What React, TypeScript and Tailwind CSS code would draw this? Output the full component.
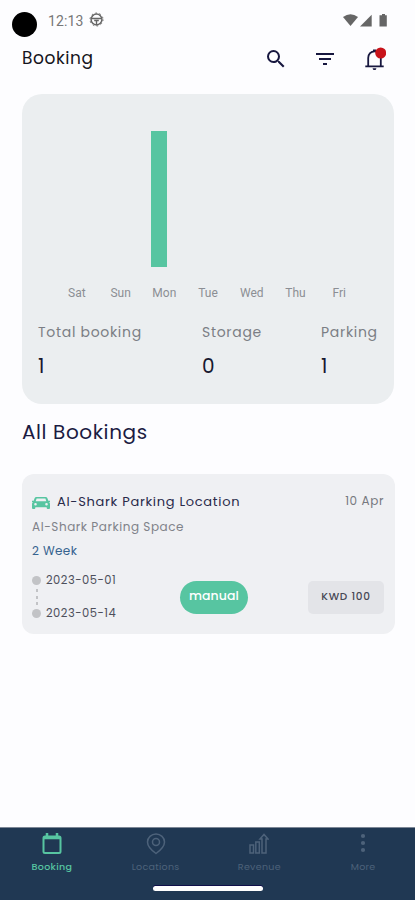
import React from "react";
import clsx from "clsx";
import { MdFilterList, MdSearch } from "react-icons/md";

const days = [
  { label: "Sat", value: 0 },
  { label: "Sun", value: 0 },
  { label: "Mon", value: 1 },
  { label: "Tue", value: 0 },
  { label: "Wed", value: 0 },
  { label: "Thu", value: 0 },
  { label: "Fri", value: 0 },
];

const StatusBar: React.FC<{}> = () => (
  <div className="flex h-10 items-start pl-3 pr-[27px] pt-3 text-[#666]">
    <div className="h-[25px] w-[25px] shrink-0 rounded-full bg-black" />
    <span className="ml-[11px] font-[Roboto] text-[14px] leading-[18px] tracking-[0.1px] text-[#777]">
      12:13
    </span>
    <svg className="ml-[6px]" width="15" height="15" viewBox="0 0 15 15" fill="none" stroke="currentColor">
      <circle cx="7.5" cy="7.5" r="5.4" strokeWidth="1.5" />
      <circle cx="7.5" cy="7.5" r="6.5" strokeWidth="1" strokeDasharray="1.6 2.5" />
      <path d="M3 6.5h9M7.5 8v5M5.2 8.5h4.6" strokeWidth="1.4" />
    </svg>
    <svg className="ml-auto mt-[2px]" width="45" height="13" viewBox="0 0 45 13" fill="currentColor">
      <path d="M0 3Q7.5-2.5 15 3L7.5 12Z" />
      <path d="M17 12.5L28.7.8V12.5Z" />
      <path d="M39 0h3v1.3h1.8v11.2h-7.3V1.3H39Z" />
    </svg>
  </div>
);

const Header: React.FC<{}> = () => (
  <div className="flex h-[38px] items-center pl-[22px] pr-[29px] text-[#17173f]">
    <h1 className="pb-[2px] text-[17px] leading-none tracking-[0.6px] text-[#15151c]">Booking</h1>
    <MdSearch className="ml-auto" size={24} />
    <MdFilterList className="ml-[25px]" size={24} />
    <svg className="ml-[26px]" width="23" height="26" viewBox="0 0 23 26" fill="none">
      <path d="M5.2 20V12C5.2 8 8 5.3 11.5 5.3S17.8 8 17.8 12V20M2.3 20.3H20.7" stroke="currentColor" strokeWidth="1.8" />
      <path d="M10 5.5V3.6h3v1.9M9.6 22.2h3.8a1.9 1.9 0 0 1-3.8 0Z" fill="currentColor" />
      <circle cx="17.7" cy="7" r="5.5" fill="#c8131a" />
    </svg>
  </div>
);

const Chart: React.FC<{}> = () => (
  <div className="ml-[33px] flex h-[187px] w-[306px] pt-[37px]">
    {days.map((day) => (
      <div key={day.label} className="flex flex-1 flex-col items-center">
        <div className="mr-[10px] flex h-[136px] w-4 shrink-0 items-end">
          <div className="w-full bg-[#57c5a1]" style={{ height: `${day.value * 100}%` }} />
        </div>
        <span className="mt-5 font-[Roboto] text-[12px] leading-3 text-[#8b8e94]">{day.label}</span>
      </div>
    ))}
  </div>
);

const Stat: React.FC<{ label: string; value: number; className?: string }> = ({
  label,
  value,
  className,
}) => (
  <div className={clsx("shrink-0 whitespace-nowrap", className)}>
    <p className="text-[14px] leading-[18px] tracking-[0.7px] text-[#7b7e85]">{label}</p>
    <p className="mt-[13px] text-[20px] leading-6 text-[#17182f]">{value}</p>
  </div>
);

const BookingCard: React.FC<{}> = () => (
  <div className="ml-[22px] mr-5 mt-[30px] h-[160px] rounded-xl bg-[#eff0f3] pl-[10px] pr-[11px] pt-[18px]">
    <div className="flex h-[18px] items-center">
      <svg className="mt-[3px]" width="18" height="12" viewBox="0 0 18 13" preserveAspectRatio="none" fill="#57c5a1" fillRule="evenodd">
        <path d="M4.4 0h9.2q1.3 0 1.7 1.2L16.3 4H18v1.5h-1q1 .8 1 2V12q0 1-1 1h-1.3q-1 0-1-1v-1H3.3v1q0 1-1 1H1q-1 0-1-1V7.5q0-1.2 1-2H0V4h1.7l1-2.8Q3.1 0 4.4 0ZM4.6 1.6 3.7 4.6h10.6l-.9-3ZM3.5 6.5a1.3 1.3 0 1 0 0 2.6 1.3 1.3 0 0 0 0-2.6Zm11 0a1.3 1.3 0 1 0 0 2.6 1.3 1.3 0 0 0 0-2.6Z" />
      </svg>
      <span className="ml-[7px] whitespace-nowrap pt-px text-[13px] tracking-[0.7px] text-[#292a4a]">
        Al-Shark Parking Location
      </span>
      <span className="ml-auto whitespace-nowrap text-[12px] tracking-[0.6px] text-[#777980]">10 Apr</span>
    </div>
    <p className="mt-2 text-[12px] leading-[18px] tracking-[0.55px] text-[#808289]">Al-Shark Parking Space</p>
    <p className="mt-[6px] text-[12px] leading-[18px] tracking-[0.4px] text-[#36638f]">2 Week</p>
    <div className="mt-[13px] flex h-[47px] items-center pt-px">
      <div className="flex h-[42px] w-[9px] flex-col items-center justify-between">
        <span className="h-[9px] w-[9px] rounded-full bg-[#c2c3c6]" />
        <span className="h-[3px] w-[2px] bg-[#c2c3c6]" />
        <span className="h-[3px] w-[2px] bg-[#c2c3c6]" />
        <span className="h-[3px] w-[2px] bg-[#c2c3c6]" />
        <span className="h-[9px] w-[9px] rounded-full bg-[#c2c3c6]" />
      </div>
      <div className="ml-[5px] flex w-[134px] flex-col gap-[19px] pb-px text-[11.5px] leading-[14px] tracking-[0.5px] text-[#4d4f5b]">
        <span>2023-05-01</span>
        <span>2023-05-14</span>
      </div>
      <span className="flex h-[33px] w-[68px] items-center justify-center rounded-full bg-[#57c5a1] pb-[2px] text-[12.5px] font-medium tracking-[0.1px] text-white">
        manual
      </span>
      <span className="ml-auto flex h-[33px] w-[76px] items-center justify-center rounded-[5px] bg-[#e3e4e8] pb-px text-[10.5px] font-medium tracking-[0.7px] text-[#464855]">
        KWD 100
      </span>
    </div>
  </div>
);

const CalendarIcon = () => (
  <svg width="20" height="22" viewBox="0 0 20 22" fill="none" stroke="currentColor">
    <rect x="1.5" y="3.5" width="17" height="16.5" rx="1.5" strokeWidth="2" />
    <path d="M1 5h18M5 0v4M15 0v4" strokeWidth="2.5" />
  </svg>
);

const PinIcon = () => (
  <svg width="20" height="22" viewBox="0 0 20 22" fill="none" stroke="currentColor" strokeWidth="1.5">
    <path d="M10 20.500C6.500 18 1.500 13.500 1.500 9a8.500 8 0 0 1 17 0c0 4.500-5 9-8.500 11.500Z" />
    <circle cx="10" cy="9" r="3.5" />
  </svg>
);

const RevenueIcon = () => (
  <svg width="20" height="22" viewBox="0 0 20 22" fill="none" stroke="currentColor" strokeWidth="1.5">
    <path d="M1 12h3.500v8H1ZM6.800 9h3.500v11H6.800ZM13 20V6h-2l4-4.500L19 6h-2v14Z" />
  </svg>
);

const MoreIcon = () => (
  <svg width="20" height="22" viewBox="0 0 20 22" fill="currentColor">
    <circle cx="10" cy="3" r="2.1" />
    <circle cx="10" cy="10" r="2.1" />
    <circle cx="10" cy="17" r="2.1" />
  </svg>
);

const tabs = [
  { label: "Booking", icon: CalendarIcon, active: true },
  { label: "Locations", icon: PinIcon },
  { label: "Revenue", icon: RevenueIcon },
  { label: "More", icon: MoreIcon },
];

const TabBar: React.FC<{}> = () => (
  <nav className="mt-auto h-[73px] border-t border-[#7d8796] bg-[#203853]">
    <div className="flex h-[56px] w-[415px] pt-[5px]">
      {tabs.map(({ label, icon: Icon, active }) => (
        <div
          key={label}
          className={clsx(
            "flex flex-1 flex-col items-center",
            active ? "font-medium text-[#57c5a1]" : "text-[#4d627a]"
          )}
        >
          <Icon />
          <span className="mt-[6px] text-[9.5px] leading-3 tracking-[0.3px]">{label}</span>
        </div>
      ))}
    </div>
    <div className="mx-auto mt-[2px] h-[5px] w-[110px] rounded-full bg-white shadow-[0_-1px_0_#10104a]" />
  </nav>
);

const App: React.FC<{}> = () => {
  return (
    <div className="flex h-[900px] w-[415px] flex-col overflow-hidden bg-[#fdfdff] font-[Poppins,Inter,sans-serif]">
      <StatusBar />
      <Header />
      <section className="ml-[22px] mr-[21px] mt-4 h-[310px] rounded-[20px] bg-[#ebeef0]">
        <Chart />
        <div className="mt-[42px] flex pl-4">
          <Stat label="Total booking" value={1} className="w-[164px]" />
          <Stat label="Storage" value={0} className="w-[119px]" />
          <Stat label="Parking" value={1} />
        </div>
      </section>
      <h2 className="ml-[22px] mt-4 text-[20px] leading-6 tracking-[0.6px] text-[#1b1b42]">
        All Bookings
      </h2>
      <BookingCard />
      <TabBar />
    </div>
  );
};

export default App;
